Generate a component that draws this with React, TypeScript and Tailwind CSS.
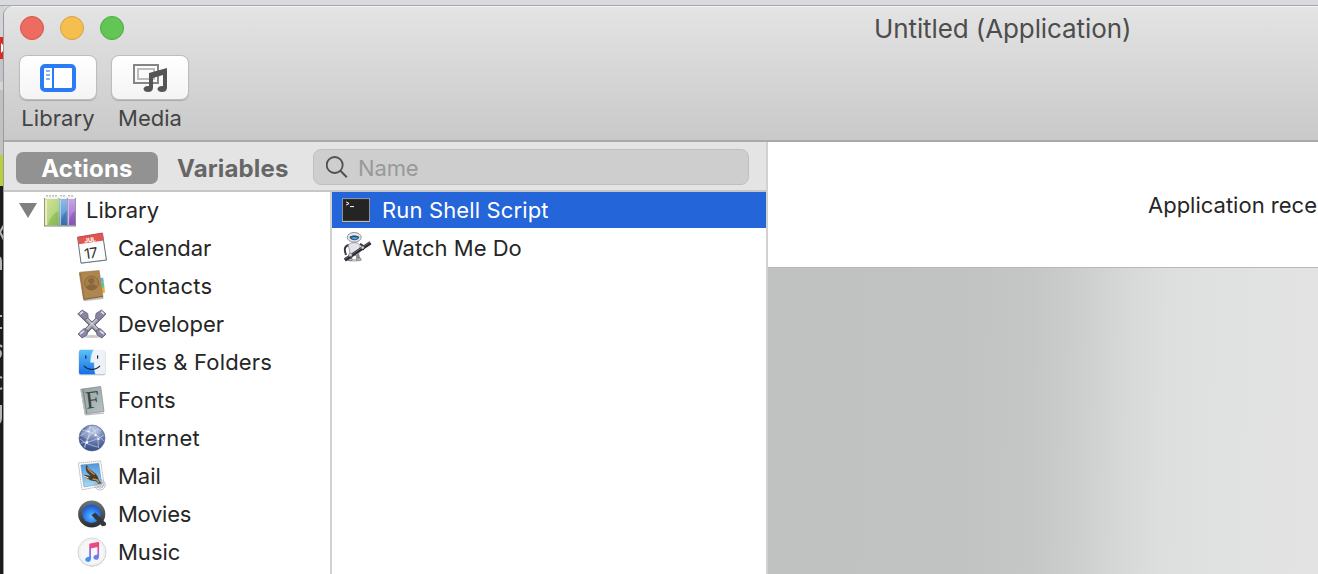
import type { ReactNode } from 'react';

const Icon = ({ children }: { children: ReactNode }) => (
  <svg className="size-8 shrink-0" viewBox="0 0 32 32" fill="none">
    {children}
  </svg>
);

const LibraryIcon = () => (
  <Icon>
    <defs>
      <linearGradient id="bookGreen" x1="0" y1="0" x2="1" y2="1">
        <stop offset="0" stopColor="#d0e498" />
        <stop offset="0.6" stopColor="#b7d680" />
        <stop offset="1" stopColor="#93bd5c" />
      </linearGradient>
      <linearGradient id="bookBlue" x1="0" y1="0" x2="0" y2="1">
        <stop offset="0" stopColor="#8fbbea" />
        <stop offset="0.5" stopColor="#6aa2db" />
        <stop offset="1" stopColor="#3d73b4" />
      </linearGradient>
      <linearGradient id="bookPurple" x1="0" y1="0" x2="0" y2="1">
        <stop offset="0" stopColor="#c4a5ea" />
        <stop offset="0.5" stopColor="#b184dc" />
        <stop offset="1" stopColor="#8f5cc0" />
      </linearGradient>
    </defs>
    <path d="M0 4 2 1h13v3ZM15 4l2-3h6v3ZM23 4l2-3h5l2 3Z" fill="#f3f3ef" />
    <path d="M2 .8h12M16 .8h6M24 .8h6" stroke="#9b9b94" strokeWidth="0.9" strokeDasharray="2 1" />
    <path d="M.5 3v28M15 3v28M23.3 3v28M31.6 3v28" stroke="#6f7a66" strokeWidth="0.9" />
    <rect x="0.8" y="4" width="14" height="26.5" fill="url(#bookGreen)" />
    <path d="M2 5v25" stroke="#f2eec0" strokeWidth="1.8" />
    <path d="M14.5 16C8 20 5 24 4 30h10.5Z" fill="#72a73b" opacity=".4" />
    <rect x="15.5" y="4" width="7.5" height="26.5" fill="url(#bookBlue)" />
    <path d="M22.8 16c-4 3-6 8-6 14h6Z" fill="#2d66a6" opacity=".5" />
    <path d="M16.5 5v25" stroke="#b7d8ef" strokeWidth="0.8" />
    <rect x="23.7" y="4" width="7.6" height="26.5" fill="url(#bookPurple)" />
    <path d="M31 16c-4 3-6 8-6 14h6Z" fill="#7943a7" opacity=".4" />
    <path d="M24.5 5v25" stroke="#dbc6ef" strokeWidth="0.8" />
    <path d="M0 31h32" stroke="#7d876f" strokeWidth="1" />
  </Icon>
);

const CalendarIcon = () => (
  <Icon>
    <path d="M1.5 6.3 26.7 2 31 28.6 5 31.8Z" fill="#b5b5b5" />
    <path d="M1.6 5.5 26.5 1.4 30.4 28 5 31.1Z" fill="#fdfdfd" stroke="#596773" strokeWidth="0.9" />
    <path d="M1.4 5.2 26.5 1 27.7 8.5 2.7 12.2Z" fill="#e25550" />
    <path d="M1.4 5.2 26.5 1" stroke="#c4403d" strokeWidth="0.8" />
    <text x="8.4" y="10" transform="rotate(-8 14 8)" fontSize="6" fontWeight="800" fill="#fff" fontFamily="Inter, sans-serif">JUL</text>
    <text x="8.2" y="26.2" transform="rotate(-8 16 21)" fontSize="14.5" fill="#2f2f2f" fontFamily="Inter, sans-serif" letterSpacing="-0.5">17</text>
  </Icon>
);

const ContactsIcon = () => (
  <Icon>
    <path d="M7 29.7 28 26.8 27 29 8 31.2Z" fill="#bbb" />
    <path d="m24.5 8 2.7-.4.7 5-2.5.6Z" fill="#5ab7df" />
    <path d="m25 13 3-.3.5 5-2.5.6Z" fill="#69c48b" />
    <path d="m26 18 2.6-.3.3 5-2.4.5Z" fill="#ecad43" />
    <path d="M3.3 3Q3.4 2.3 4.2 2.2L23.2.6l3.7 25.6L7.5 29.4Z" fill="#ae8750" stroke="#94703f" strokeWidth="0.6" />
    <path d="M4.3 3 8 28.6" stroke="#997341" strokeWidth="1.3" />
    <g stroke="#886238" strokeWidth="0.8">
      <circle cx="15.6" cy="13" r="7" fill="#a77f49" />
      <circle cx="15.3" cy="10.8" r="2.6" fill="#8a683b" />
      <path d="M10.5 17.2c1-2.7 8-3.5 10.1-.7-2.3 4-8 4-10.1.7Z" fill="#8a683b" />
    </g>
    <path d="m8 29.3 19-2.9" stroke="#7b5831" strokeWidth="0.9" />
  </Icon>
);

const DeveloperIcon = () => (
  <Icon>
    <ellipse cx="16" cy="28.5" rx="11" ry="1.5" fill="#ccc" />
    <path d="M5 6 26 27M27 6 6 27" stroke="#505061" strokeWidth="4.6" />
    <path d="M5 6 26 27M27 6 6 27" stroke="#a6a6b2" strokeWidth="2.8" />
    <path d="m6 5.5 20 20M26 5.5l-20 20" stroke="#ececf4" strokeWidth="0.9" />
    <path d="m1.7 6 4.5-4 5.5 3.5.5 4L8.5 12ZM30 6l-4.5-4L20 5.5l-.5 4 4 2.5ZM2 26l4 4 5-3 1-4.5-4-2ZM30 26l-4 4-5-3-1-4.5 4-2Z" fill="#8785a0" stroke="#626079" strokeWidth="0.8" />
    <path d="m4 6 3-2.4M28 6l-3-2.4M4 26l4-3M28 26l-4-3" stroke="#dcd9f4" strokeWidth="1.8" />
  </Icon>
);

const FinderIcon = () => (
  <Icon>
    <defs>
      <linearGradient id="finderBlue" x1="0" y1="0" x2="0" y2="1">
        <stop stopColor="#5bc1f8" />
        <stop offset="1" stopColor="#176fe9" />
      </linearGradient>
    </defs>
    <rect x="2.7" y="4.4" width="26.8" height="24.8" rx="2" fill="#b5b9be" />
    <rect x="3" y="3.8" width="26.4" height="24.5" rx="1.7" fill="#eef2f7" />
    <path d="M4.7 3.8h13c-2 3-3 8-3 12.5h3.5c-.1 5 .3 9 1.3 12H4.7Q3 28.3 3 26.6V5.5Q3 3.8 4.7 3.8Z" fill="url(#finderBlue)" />
    <path d="M17.8 3.8c-2.3 3.5-3.2 8-3.2 12.5h3.7c-.1 4.5.2 9 1.2 12" stroke="#d7eefe" strokeWidth="0.6" />
    <path d="M9.8 9.8v2.4M21.6 9.8v2.4" stroke="#15293c" strokeWidth="1.2" strokeLinecap="round" />
    <path d="M8.2 20.2c4 4.3 11.6 4.3 15.5 0" stroke="#15293c" strokeWidth="1.1" strokeLinecap="round" />
  </Icon>
);

const FontsIcon = () => (
  <Icon>
    <defs>
      <linearGradient id="fontBook" x1="0" y1="0" x2="1" y2="1">
        <stop stopColor="#94a2a3" />
        <stop offset="1" stopColor="#b7c3c0" />
      </linearGradient>
    </defs>
    <path d="m8 30.4 20-2-.2 1.3-18 1.7Z" fill="#bbb" />
    <path d="M4.7 5.2 24.7 2.5 28 27.4 9 30Z" fill="url(#fontBook)" stroke="#7c898a" strokeWidth="0.7" />
    <path d="m7 5.3 3.8 24.2" stroke="#697a7b" strokeWidth="0.8" />
    <path d="M4.9 5.3 9 29.8" stroke="#cbd4d2" strokeWidth="0.8" />
    <text x="9.6" y="24" transform="rotate(-7 16 16)" fontSize="25" fill="#364448" fontFamily="Liberation Serif, serif">F</text>
  </Icon>
);

const InternetIcon = () => (
  <Icon>
    <defs>
      <radialGradient id="globe" cx=".6" cy=".2" r=".9">
        <stop stopColor="#b2c3e4" />
        <stop offset=".5" stopColor="#6679ac" />
        <stop offset="1" stopColor="#293e79" />
      </radialGradient>
    </defs>
    <circle cx="16" cy="16" r="13" fill="url(#globe)" stroke="#576992" strokeWidth="0.6" />
    <path d="M5 10c6-2 8-6 14-6l7 4-3 4-7 1-4 5-7-4Z" fill="#c2cce3" opacity=".35" />
    <g stroke="#dce6f8" strokeWidth="0.7" opacity=".8">
      <path d="M3.5 14c5-2 8-5 11-10 5 5 8 11 8 22M6 8c8 1 16 5 22 11M9 26c0-8 4-15 14-19M5 21c8-1 16-3 23-8M4 17c5 4 12 7 18 8M14 4c0 8-2 15-6 21" />
    </g>
    <g fill="#fff"><circle cx="12.4" cy="9.5" r="1" /><circle cx="19.5" cy="13.2" r="1" /><circle cx="11" cy="20.5" r="1.3" /><circle cx="22.5" cy="17" r="1" /></g>
  </Icon>
);

const MailIcon = () => (
  <Icon>
    <defs>
      <linearGradient id="stampSky" x1="0" y1="0" x2="0" y2="1">
        <stop stopColor="#4f97dc" />
        <stop offset="1" stopColor="#a8daf4" />
      </linearGradient>
    </defs>
    <path d="M2.3 3 24.7.9l3.5 24.7L6 29.8Z" fill="#fcfcfc" stroke="#b5b5b5" strokeWidth="0.9" strokeDasharray="1.6 .5" />
    <path d="M4.8 5 22.8 3.2 25.8 24 8 26.9Z" fill="url(#stampSky)" stroke="#4a76a0" strokeWidth="0.4" />
    <path d="M10.5 4.8c-1.5 3.5-.6 7 2.5 9.4l1.7 1.6-7-1 1.8 2.8 5.5 3 4.6.7 3 2.7 3-.8-2.6-3.2c-1-4-3-6.2-6-8.2-3-2-4.8-4-6.5-7Z" fill="#4c3d32" />
    <path d="M11.5 7.5c1.5 3.3 4 5 7 7.2M16.7 19l4.2.8 1.8 2.2" stroke="#c99245" strokeWidth="1.3" />
    <path d="m8 16 4.5 2" stroke="#f1d9a0" strokeWidth="1.2" />
    <circle cx="24" cy="24.8" r="5.3" stroke="#8b9aa8" strokeWidth="0.8" opacity=".7" />
    <circle cx="24" cy="24.8" r="3.6" stroke="#8b9aa8" strokeWidth="0.6" opacity=".7" />
    <path d="M21 23h6M21 25h6M21 27h6" stroke="#8b9aa8" strokeWidth="0.6" />
  </Icon>
);

const MoviesIcon = () => (
  <Icon>
    <defs>
      <radialGradient id="movieBlue" cx=".5" cy=".65" r=".6">
        <stop stopColor="#5dbbff" />
        <stop offset=".55" stopColor="#3285f2" />
        <stop offset="1" stopColor="#1f59c6" />
      </radialGradient>
      <linearGradient id="movieRing" x1="0" y1="0" x2="0" y2="1">
        <stop stopColor="#6d747a" />
        <stop offset="1" stopColor="#2b2f34" />
      </linearGradient>
    </defs>
    <circle cx="15.7" cy="16" r="13.6" fill="url(#movieRing)" />
    <circle cx="15.5" cy="15.8" r="9.2" fill="url(#movieBlue)" />
    <path d="m15.6 17.2 3.6-2.6 10.5 10.2c.6.7.7 3-1 3l-2.5.4Z" fill="#33383e" />
  </Icon>
);

const MusicIcon = () => (
  <Icon>
    <defs>
      <linearGradient id="musicNote" gradientUnits="userSpaceOnUse" x1="19" y1="8" x2="15" y2="25">
        <stop stopColor="#f94465" />
        <stop offset=".45" stopColor="#a765dd" />
        <stop offset="1" stopColor="#3598f4" />
      </linearGradient>
    </defs>
    <circle cx="16" cy="16.7" r="14" fill="#c7c7cb" />
    <circle cx="16" cy="16" r="14" fill="#f7f7fa" stroke="#c9c9cf" strokeWidth="0.7" />
    <circle cx="16" cy="16" r="12.4" stroke="#e2e2e7" strokeWidth="0.5" />
    <path d="M13.2 8.7c0-.7.4-1.1 1-1.2l7.8-1.6c.7-.1 1.1.2 1.1.9v13.4c0 2.5-1.2 3.6-3 3.6-3.5 0-3.6-4.1-.3-4.7 1.2-.2 1.6-.5 1.6-1.5v-6.5L15 12.5v9.9c0 2.4-1.2 3.5-3 3.5-3.6 0-3.6-4.2-.3-4.8 1.1-.2 1.5-.5 1.5-1.4Z" fill="url(#musicNote)" />
  </Icon>
);

const TerminalIcon = () => (
  <Icon>
    <rect x="2" y="5" width="28" height="24.3" rx="1" fill="#35558c" opacity=".6" />
    <rect x="2" y="4.2" width="28" height="23.8" rx="0.7" fill="#b9bbbe" />
    <path d="M3.1 5.3h25.8v21.2H3.1Z" fill="#242424" stroke="#111" strokeWidth="0.6" />
    <path d="m6.1 7.9 3 1.6-3 1.6M10 12.6h4" stroke="#fff" strokeWidth="1" />
  </Icon>
);

const AutomatorIcon = () => (
  <Icon>
    <ellipse cx="14" cy="28.3" rx="7" ry="1.3" fill="#bbb" />
    <path d="M9 13C4 14 4 18 6 23M20 12c3 1 4 3 3 6" stroke="#353744" strokeWidth="2" />
    <path d="m11 22-.7 5M17 21l1.5 6" stroke="#8b8d98" strokeWidth="3.6" />
    <path d="m8 27 4-.5v2H8ZM16.7 26l4 .2.6 2h-4.8Z" fill="#c5c6ce" stroke="#555" strokeWidth="0.5" />
    <path d="M8.3 13.1c2-3.2 9.5-3.4 11.8 0l-1.4 8.4c-2 2.7-6.7 2.4-8.6-.2Z" fill="#e3e3e9" stroke="#85868f" strokeWidth="0.7" />
    <ellipse cx="14.2" cy="5.3" rx="7" ry="4.9" fill="#e3e3e8" stroke="#7d7e86" strokeWidth="0.8" />
    <path d="M9.5 5c2-2 7.5-2 9.8 0-.4 4-8.5 4.4-9.8 0Z" fill="#31475f" />
    <path d="M11 5.8c2-1 5-1 7-.2-1 2.4-5 2.6-7 .2Z" fill="#36a7f4" />
    <path d="M4.8 28 30.5 10.8" stroke="#282832" strokeWidth="3.5" />
    <path d="M5 27 30 10.2" stroke="#80808c" strokeWidth="0.8" />
    <circle cx="10.4" cy="22.9" r="1.8" fill="#d2d2da" stroke="#555" strokeWidth="0.5" />
    <circle cx="22.6" cy="15.5" r="1.5" fill="#d2d2da" stroke="#555" strokeWidth="0.5" />
  </Icon>
);

const categories: { name: string; icon: ReactNode; track: string }[] = [
  { name: 'Calendar', icon: <CalendarIcon />, track: 'tracking-[-0.05px]' },
  { name: 'Contacts', icon: <ContactsIcon />, track: 'tracking-[0.13px]' },
  { name: 'Developer', icon: <DeveloperIcon />, track: 'tracking-[-0.02px]' },
  { name: 'Files & Folders', icon: <FinderIcon />, track: 'tracking-[0.17px]' },
  { name: 'Fonts', icon: <FontsIcon />, track: 'tracking-[0.2px]' },
  { name: 'Internet', icon: <InternetIcon />, track: 'tracking-[0.2px]' },
  { name: 'Mail', icon: <MailIcon />, track: 'tracking-[0px]' },
  { name: 'Movies', icon: <MoviesIcon />, track: 'tracking-[-0.3px]' },
  { name: 'Music', icon: <MusicIcon />, track: 'tracking-[0px]' },
];

function BackgroundEdge() {
  return (
    <div className="flex w-1 shrink-0 flex-col overflow-hidden bg-[#1d1c19]">
      <div className="h-[31px] bg-[#d3d4d8]" />
      <div className="flex h-[22px] items-center bg-[#d92c22]">
        <svg className="h-2.5 w-1" viewBox="0 0 4 10"><path d="M1 0 4 3v4l-3 3Z" fill="#fff" /></svg>
      </div>
      <div className="h-[23px] bg-[#c3c4c7]" />
      <div className="h-2 bg-[#d4d5d4]" />
      <div className="h-[65px] bg-[#c0c1c3]" />
      <div className="h-[31px] bg-[#b8d03d]" />
      <svg className="h-[388px] w-1" viewBox="0 186 4 388" fill="none" stroke="#b7b7b3" strokeWidth="2">
        <path d="M4 225 0 232l4 8M-2 257q3 0 3 5v8M0 316h2M0 328h2M0 345l2 2M-1 350q4 3 0 8M0 377l2 1M0 389l2-1M1 405v12q0 5-2 6" />
      </svg>
    </div>
  );
}

function Toolbar() {
  return (
    <header className="relative flex h-[136px] shrink-0 flex-col border-b-2 border-[#a9a9a9] bg-linear-to-b from-[#e4e4e4] to-[#c9c9c9] shadow-[inset_0_1px_0_#f5f5f5]">
      <div className="flex h-[49px] items-start gap-4 pt-[10px] pl-4">
        <span className="size-6 rounded-full border border-[#d5544c] bg-[#ed6b60]" />
        <span className="size-6 rounded-full border border-[#d9a13c] bg-[#f5bf50]" />
        <span className="size-6 rounded-full border border-[#4ca83e] bg-[#62c656]" />
      </div>
      <div className="flex gap-[14px] pl-[15px] text-[22px] leading-7 text-[#444]">
        <div className="flex w-[78px] flex-col items-center">
          <div className="flex h-[45px] w-[78px] items-center justify-center rounded-[8px] border border-[#bdbdbd] bg-linear-to-b from-white to-[#f4f4f4] shadow-[0_1px_1px_#aaa]">
            <svg width="36" height="28" viewBox="0 0 36 28" fill="none">
              <rect x="2" y="2" width="32" height="24" rx="3" fill="white" stroke="#2b7bf6" strokeWidth="4" />
              <path d="M13 3v22" stroke="#2b7bf6" strokeWidth="2" />
              <path d="M6 7h4M6 11h4M6 15h4" stroke="#82b2fa" strokeWidth="2" />
            </svg>
          </div>
          <span className="mt-1 tracking-[0.1px]">Library</span>
        </div>
        <div className="flex w-[78px] flex-col items-center">
          <div className="flex h-[45px] w-[78px] items-center justify-center rounded-[8px] border border-[#bdbdbd] bg-linear-to-b from-white to-[#f4f4f4] shadow-[0_1px_1px_#aaa]">
            <svg width="36" height="28" viewBox="0 0 36 28" fill="none">
              <path d="M2 1h24v18H2Z" stroke="#858585" strokeWidth="2" />
              <path d="M6 5h16v10H6Z" stroke="#bdbdbd" strokeWidth="2" />
              <path d="M17 9 35 4v19.5c0 3-2 4.5-5 4.5-6 0-6-6 0-6h1V11l-10 3v9.5c0 3-2 4.5-5 4.5-6 0-6-6 0-6h1Z" fill="#555" />
            </svg>
          </div>
          <span className="mt-1">Media</span>
        </div>
      </div>
      <h1 className="absolute top-[7px] left-[870px] text-[26px] leading-8 tracking-[-0.1px] whitespace-nowrap text-[#4d4d4d]">Untitled (Application)</h1>
    </header>
  );
}

export default function App() {
  return (
    <div className="flex h-[574px] w-[1318px] flex-col overflow-hidden bg-[#d8dae0] font-['Inter',sans-serif] text-[#262626]">
      <div className="h-[6px] shrink-0 border-b border-[#a7a7aa]" />
      <div className="flex min-h-0 flex-1">
        <BackgroundEdge />
        <div className="flex min-w-0 flex-1 flex-col overflow-hidden rounded-tl-[9px] shadow-[-1px_0_0_#9b9b9d]">
          <Toolbar />
          <div className="flex min-h-0 flex-1">
            <aside className="flex w-[764px] shrink-0 flex-col border-r-2 border-[#d1d1d1] bg-white">
              <div className="flex h-[50px] shrink-0 items-start border-b-2 border-[#c6c6c6] bg-[#e4e4e4] pl-3">
                <div className="mt-[10px] flex h-8 w-[142px] justify-center rounded-[7px] bg-[#929292] text-[24px] leading-[33px] font-bold tracking-[0.25px] text-white">Actions</div>
                <div className="mt-[10px] ml-[19px] w-[112px] text-[24px] leading-[33px] font-bold tracking-[0.15px] text-[#666]">Variables</div>
                <div className="mt-[7px] ml-[24px] flex h-[36px] w-[436px] items-center rounded-[8px] border border-[#bfbfbf] bg-[#cecece] pl-3">
                  <svg width="22" height="22" viewBox="0 0 22 22" fill="none" stroke="#505050" strokeWidth="1.8">
                    <circle cx="8.7" cy="9" r="8" />
                    <path d="m14.4 14.8 6.4 6.4" strokeWidth="2" />
                  </svg>
                  <span className="mt-0.5 ml-[10px] text-[22px] tracking-[-0.15px] text-[#999]">Name</span>
                </div>
              </div>
              <div className="flex min-h-0 flex-1 text-[22px]">
                <nav className="flex w-[328px] shrink-0 flex-col border-r-2 border-[#d1d1d1]">
                  <div className="flex h-[37px] shrink-0 items-center pl-[15px]">
                    <svg className="mr-[7px] h-[15px] w-[18px]" viewBox="0 0 18 15"><path d="M0 0h18L9 15Z" fill="#808080" /></svg>
                    <LibraryIcon />
                    <span className="ml-[10px] -mt-px tracking-[0.05px]">Library</span>
                  </div>
                  {categories.map((item) => (
                    <div key={item.name} className="flex h-[38px] shrink-0 items-center pl-[72px]">
                      {item.icon}
                      <span className={`ml-[10px] ${item.track}`}>{item.name}</span>
                    </div>
                  ))}
                </nav>
                <div className="flex min-w-0 flex-1 flex-col">
                  <div className="mb-0.5 flex h-[36px] items-center bg-[#2465d9] pl-2 text-white">
                    <TerminalIcon />
                    <span className="ml-[10px] tracking-[0.14px]">Run Shell Script</span>
                  </div>
                  <div className="flex h-[36px] items-center pl-2">
                    <AutomatorIcon />
                    <span className="ml-[10px] tracking-[0.02px]">Watch Me Do</span>
                  </div>
                </div>
              </div>
            </aside>
            <main className="flex min-w-0 flex-1 flex-col">
              <div className="flex h-[126px] shrink-0 items-center overflow-hidden border-b border-[#b8b8b8] bg-white pt-0.5 pl-[380px] text-[22px] whitespace-nowrap">
                Application rece
              </div>
              <div className="flex-1 bg-[linear-gradient(91deg,#c0c2c1_0%,#c1c3c2_35%,#c5c7c6_48%,#cccecd_56%,#d7d9d8_65%,#dddfde_72%,#e0e2e1_82%,#e2e3e2_100%)]" />
            </main>
          </div>
        </div>
      </div>
    </div>
  );
}
